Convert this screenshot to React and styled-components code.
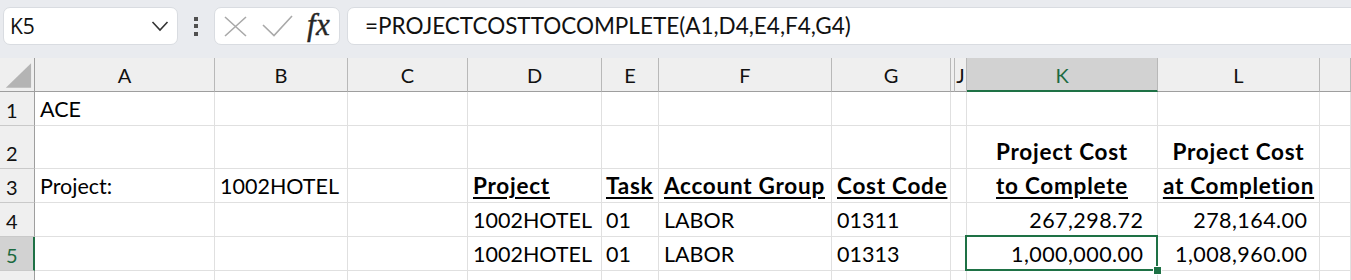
import React from "react";
import styled, { createGlobalStyle, css } from "styled-components";

const GREEN = "#1e7145";

const GlobalStyle = createGlobalStyle`
  html, body { margin: 0; padding: 0; background: #fff; }
  body { font-family: Lato, "Liberation Sans", sans-serif; overflow: hidden; }
`;

const Page = styled.div`
  width: 1351px;
  height: 280px;
  overflow: hidden;
  display: flex;
  flex-direction: column;
`;

const Toolbar = styled.div`
  flex: none;
  height: 58px;
  box-sizing: border-box;
  background: #e9ebef;
  display: flex;
  align-items: flex-start;
  padding: 7px 0 0 3px;
  overflow: hidden;
`;

const Box = styled.div`
  height: 38px;
  box-sizing: border-box;
  background: #fff;
  border: 1px solid #d9dce1;
  border-radius: 7px;
  display: flex;
  align-items: center;
  flex: none;
`;

const NameBox = styled(Box)`
  width: 175px;
  justify-content: space-between;
  padding: 0 8px 0 6px;
`;

const NameText = styled.span`
  font-family: "Open Sans", sans-serif;
  font-size: 21px;
  line-height: 1;
  color: #111;
`;

const Grip = styled.div`
  width: 36px;
  height: 38px;
  flex: none;
  display: flex;
  flex-direction: column;
  align-items: center;
  justify-content: center;
  gap: 3.5px;
`;

const GripDot = styled.span`
  width: 4px;
  height: 4px;
  background: #505050;
`;

const FxBox = styled(Box)`
  width: 126px;
  padding: 0 0 0 9px;
`;

const IconSlot = styled.span`
  display: flex;
  margin-right: ${(p) => p.$mr || 0}px;
`;

const FxText = styled.span`
  font-family: "Liberation Serif", "DejaVu Serif", serif;
  font-style: italic;
  font-size: 31px;
  line-height: 1;
  color: #262626;
  letter-spacing: 0.5px;
  margin-top: -4px;
  -webkit-text-stroke: 0.4px #262626;
`;

const FormulaBox = styled(Box)`
  flex: 1;
  margin: 0 -12px 0 7px;
  padding-left: 17px;
`;

const FormulaText = styled.span`
  font-family: Lato, sans-serif;
  font-size: 22.5px;
  line-height: 1;
  color: #111;
  white-space: nowrap;
`;

const Sheet = styled.div`
  flex: 1;
  display: grid;
  grid-template-columns: ${(p) => p.$cols};
  grid-template-rows: ${(p) => p.$rows};
  overflow: hidden;
  background: #fff;
`;

const Corner = styled.div`
  box-sizing: border-box;
  background: #efefef;
  border-right: 1px solid #9e9e9e;
  border-bottom: 1px solid #9e9e9e;
  display: flex;
`;

const ColHead = styled.div`
  box-sizing: border-box;
  background: ${(p) => (p.$active ? "#d2d2d2" : "#efefef")};
  border-right: 1px solid #b8b8b8;
  border-bottom: ${(p) => (p.$active ? `2px solid ${GREEN}` : "1px solid #9e9e9e")};
  display: flex;
  align-items: center;
  justify-content: center;
  font-size: 20px;
  line-height: 1;
  color: ${(p) => (p.$active ? "#1c6a40" : "#111")};
  overflow: hidden;
  padding-top: ${(p) => (p.$active ? 1 : 0)}px;
`;

const RowHead = styled.div`
  box-sizing: border-box;
  background: ${(p) => (p.$active ? "#d2d2d2" : "#efefef")};
  border-right: ${(p) => (p.$active ? `2px solid ${GREEN}` : "1px solid #9e9e9e")};
  border-bottom: 1px solid #c9c9c9;
  display: flex;
  align-items: flex-end;
  padding: 0 0 5px 6px;
  font-size: 20px;
  line-height: 1;
  color: ${(p) => (p.$active ? "#1c6a40" : "#111")};
`;

const Cell = styled.div`
  position: relative;
  box-sizing: border-box;
  border-right: ${(p) => (p.$hidden ? "none" : "1px solid #e0e0e0")};
  border-bottom: 1px solid #e0e0e0;
  display: flex;
  align-items: flex-end;
  justify-content: ${(p) =>
    p.$align === "right" ? "flex-end" : p.$align === "center" ? "center" : "flex-start"};
  padding: 0 ${(p) => p.$pr ?? 5}px 5px ${(p) => p.$pl ?? 5}px;
  white-space: nowrap;
  font-size: 21.5px;
  line-height: 1;
  color: #000;
  ${(p) =>
    p.$selected &&
    css`
      z-index: 2;
      &::before {
        content: "";
        position: absolute;
        left: -2px;
        top: -2px;
        right: -1px;
        bottom: -1px;
        border: 2px solid ${GREEN};
        pointer-events: none;
      }
      &::after {
        content: "";
        position: absolute;
        right: -5px;
        bottom: -5px;
        width: 7px;
        height: 7px;
        background: ${GREEN};
        border: 1px solid #fff;
      }
    `}
`;

const CellText = styled.span`
  ${(p) =>
    p.$num &&
    css`
      letter-spacing: 0.45px;
      margin-right: -0.45px;
    `}
  ${(p) =>
    p.$bold &&
    css`
      font-weight: 700;
      font-size: 22.5px;
      letter-spacing: 0.75px;
    `}
  ${(p) =>
    p.$underline &&
    css`
      text-decoration: underline;
      text-decoration-thickness: 2px;
      text-underline-offset: 3px;
    `}
`;

const ChevronIcon = () => (
  <svg width="18" height="12" viewBox="0 0 18 12" aria-hidden="true">
    <path d="M1.5 2 L9 10 L16.5 2" fill="none" stroke="#333" strokeWidth="1.6" />
  </svg>
);

const CancelIcon = () => (
  <svg width="23" height="21" viewBox="0 0 23 21" aria-hidden="true">
    <path d="M1 1 L22 20 M22 1 L1 20" fill="none" stroke="#a9a9a9" strokeWidth="1.6" />
  </svg>
);

const EnterIcon = () => (
  <svg width="31" height="22" viewBox="0 0 31 22" aria-hidden="true">
    <path d="M1 10 L12 20.5 L30 1" fill="none" stroke="#a9a9a9" strokeWidth="1.6" />
  </svg>
);

const CornerTriangle = () => (
  <svg width="35" height="34" viewBox="0 0 35 34" aria-hidden="true">
    <polygon points="6,30 32,30 32,5" fill="#b4b4b4" />
  </svg>
);

const COLUMNS = [
  { key: "A", w: 180 },
  { key: "B", w: 133 },
  { key: "C", w: 120 },
  { key: "D", w: 134 },
  { key: "E", w: 57 },
  { key: "F", w: 173 },
  { key: "G", w: 119 },
  { key: "HI", w: 4, hidden: true, label: "" },
  { key: "J", w: 12 },
  { key: "K", w: 191 },
  { key: "L", w: 162 },
  { key: "M", w: null, label: "" },
];

const h = (text) => ({ text, bold: true, underline: true });
const num = (text, pr, extra = {}) => ({ text, align: "right", pr, num: true, ...extra });

const ROWS = [
  { n: 1, h: 34, cells: { A: { text: "ACE" } } },
  {
    n: 2,
    h: 43,
    cells: {
      K: { text: "Project Cost", bold: true, align: "center", pr: 5 },
      L: { text: "Project Cost", bold: true, align: "center", pr: 5 },
    },
  },
  {
    n: 3,
    h: 34,
    cells: {
      A: { text: "Project:" },
      B: { text: "1002HOTEL" },
      D: h("Project"),
      E: { ...h("Task"), pl: 4 },
      F: h("Account Group"),
      G: h("Cost Code"),
      K: { ...h("to Complete"), align: "center" },
      L: { ...h("at Completion"), align: "center" },
    },
  },
  {
    n: 4,
    h: 34,
    cells: {
      D: { text: "1002HOTEL" },
      E: { text: "01", pl: 4 },
      F: { text: "LABOR" },
      G: { text: "01311" },
      K: num("267,298.72", 14),
      L: num("278,164.00", 12),
    },
  },
  {
    n: 5,
    h: 34,
    active: true,
    cells: {
      D: { text: "1002HOTEL" },
      E: { text: "01", pl: 4 },
      F: { text: "LABOR" },
      G: { text: "01313" },
      K: num("1,000,000.00", 14, { selected: true }),
      L: num("1,008,960.00", 12),
    },
  },
  { n: "", h: 34, cells: {} },
];

const ACTIVE_COL = "K";

export default function App() {
  const colTemplate =
    "35px " + COLUMNS.map((c) => (c.w ? `${c.w}px` : "1fr")).join(" ");
  const rowTemplate = "34px " + ROWS.map((r) => `${r.h}px`).join(" ");

  return (
    <Page>
      <GlobalStyle />
      <Toolbar>
        <NameBox>
          <NameText>K5</NameText>
          <ChevronIcon />
        </NameBox>
        <Grip>
          <GripDot />
          <GripDot />
          <GripDot />
        </Grip>
        <FxBox>
          <IconSlot $mr={15}>
            <CancelIcon />
          </IconSlot>
          <IconSlot $mr={14}>
            <EnterIcon />
          </IconSlot>
          <FxText>fx</FxText>
        </FxBox>
        <FormulaBox>
          <FormulaText>=PROJECTCOSTTOCOMPLETE(A1,D4,E4,F4,G4)</FormulaText>
        </FormulaBox>
      </Toolbar>

      <Sheet $cols={colTemplate} $rows={rowTemplate}>
        <Corner>
          <CornerTriangle />
        </Corner>
        {COLUMNS.map((c) => (
          <ColHead key={c.key} $active={c.key === ACTIVE_COL}>
            {c.label ?? c.key}
          </ColHead>
        ))}
        {ROWS.map((r, i) => (
          <React.Fragment key={i}>
            <RowHead $active={r.active}>{r.n}</RowHead>
            {COLUMNS.map((c) => {
              const d = r.cells[c.key];
              return (
                <Cell
                  key={c.key}
                  $hidden={c.hidden}
                  $align={d?.align}
                  $pr={d?.pr}
                  $pl={d?.pl}
                  $selected={d?.selected}
                >
                  {d && (
                    <CellText $bold={d.bold} $underline={d.underline} $num={d.num}>
                      {d.text}
                    </CellText>
                  )}
                </Cell>
              );
            })}
          </React.Fragment>
        ))}
      </Sheet>
    </Page>
  );
}
